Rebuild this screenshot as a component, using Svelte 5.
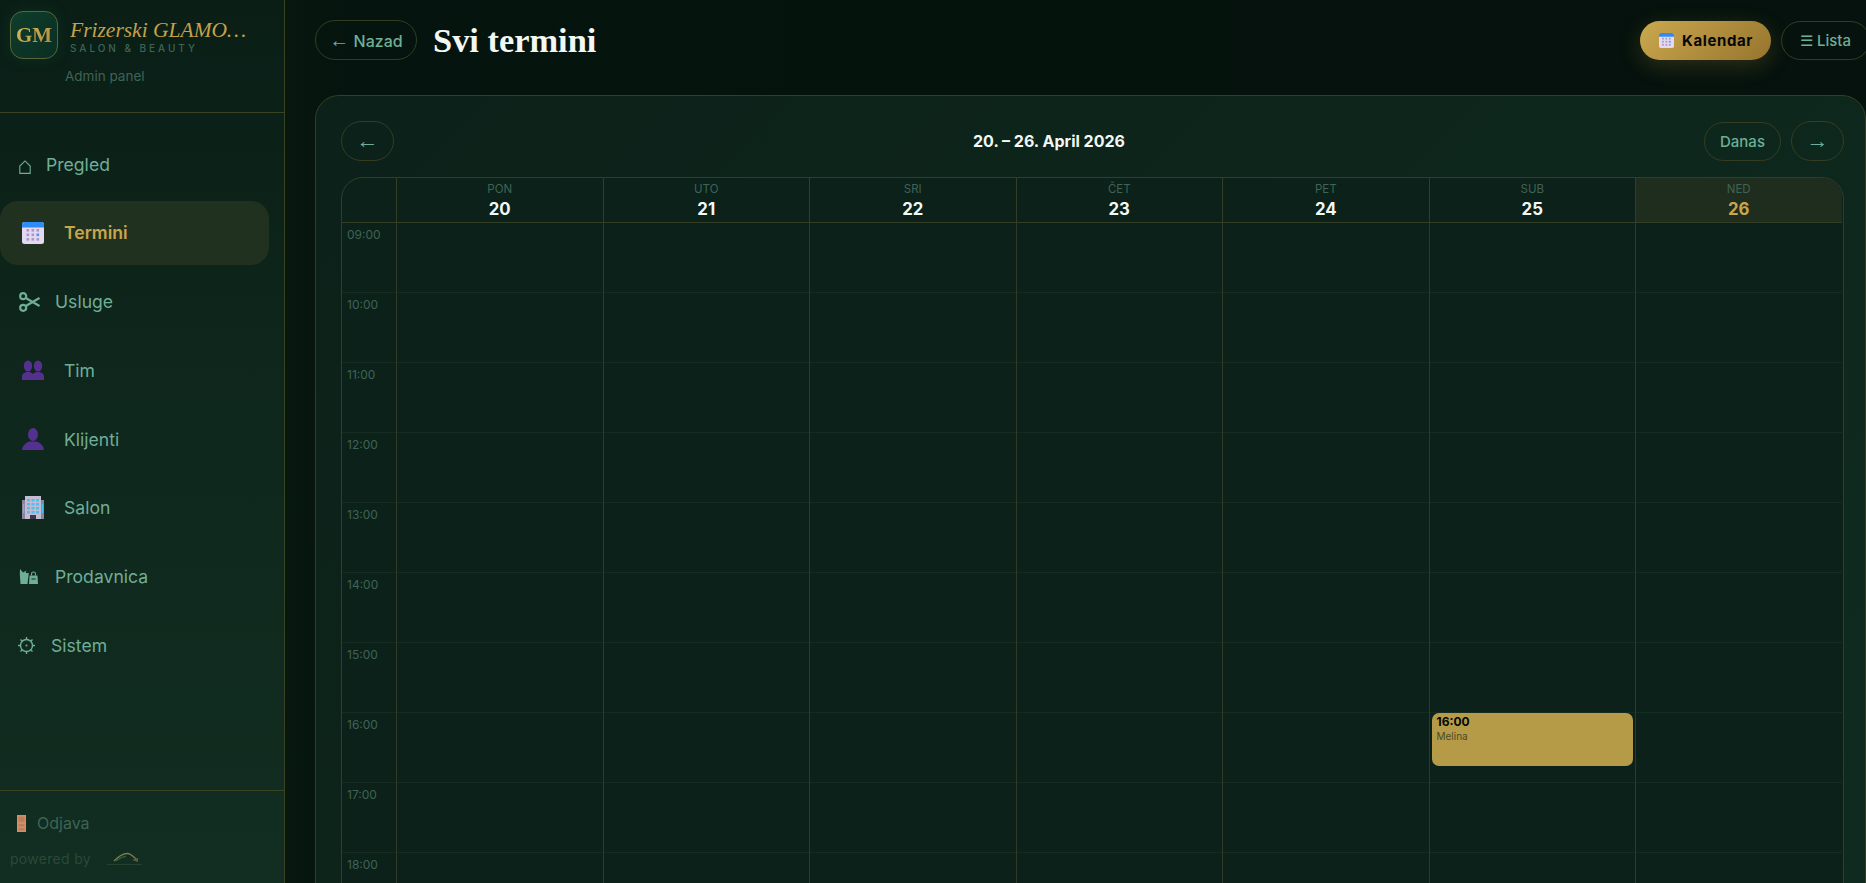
<script>
  const nav = [
    { label: 'Pregled', icon: 'home' },
    { label: 'Termini', icon: 'calendar', active: true },
    { label: 'Usluge', icon: 'scissors' },
    { label: 'Tim', icon: 'people' },
    { label: 'Klijenti', icon: 'person' },
    { label: 'Salon', icon: 'building' },
    { label: 'Prodavnica', icon: 'bags' },
    { label: 'Sistem', icon: 'gear' }
  ];
  const days = [
    { name: 'PON', num: 20 },
    { name: 'UTO', num: 21 },
    { name: 'SRI', num: 22 },
    { name: 'ČET', num: 23 },
    { name: 'PET', num: 24 },
    { name: 'SUB', num: 25, event: { time: '16:00', name: 'Melina', top: 490 } },
    { name: 'NED', num: 26, today: true }
  ];
  const hours = ['09:00', '10:00', '11:00', '12:00', '13:00', '14:00', '15:00', '16:00', '17:00', '18:00', '19:00'];
</script>

{#snippet calendar(size)}
  <svg width={size} height={size} viewBox="0 0 22 22" class="emoji">
    <rect x="0" y="0" width="22" height="22" rx="2.5" fill="#e4d8f2" />
    <path d="M0 5.5V2.5A2.5 2.5 0 0 1 2.5 0h17A2.5 2.5 0 0 1 22 2.5V5.5z" fill="#2f8cf5" />
    {#each [8, 12.5, 17] as y}
      {#each [4.5, 9.5, 14.5] as x}
        <rect {x} y={y - 1} width="2.6" height="2.6" fill={x === 14.5 && y === 12.5 ? '#3f9df2' : '#a99ac0'} />
      {/each}
    {/each}
  </svg>
{/snippet}

{#snippet icon(name)}
  {#if name === 'home'}
    <svg class="g-home" width="12" height="14" viewBox="0 0 12 14" fill="none" stroke="#6fae97" stroke-width="1.1">
      <path d="M.8 13.400V6L6 .9 11.200 6v7.400z" />
    </svg>
  {:else if name === 'calendar'}
    {@render calendar(22)}
  {:else if name === 'scissors'}
    <svg class="g-scissors" width="21" height="20" viewBox="0 0 21 20" fill="none" stroke="#6fae97" stroke-width="2.200">
      <circle cx="4.200" cy="4.200" r="3" />
      <circle cx="4.200" cy="15.800" r="3" />
      <path d="M6.800 6 20.500 14M6.800 14 20.500 6" />
    </svg>
  {:else if name === 'people'}
    <svg class="emoji" width="22" height="20" viewBox="0 0 22 20" fill="#55308f">
      <ellipse cx="6" cy="6" rx="4.2" ry="5.6" />
      <ellipse cx="16" cy="6" rx="4.2" ry="5.6" />
      <path d="M0 20v-3.5c0-3 3-4.5 6-4.5 2 0 3.800.6 5 2 1.200-1.400 3-2 5-2 3 0 6 1.500 6 4.500V20z" />
    </svg>
  {:else if name === 'person'}
    <svg class="emoji" width="22" height="22" viewBox="0 0 22 22" fill="#55308f">
      <ellipse cx="11" cy="6.500" rx="5" ry="6.500" />
      <path d="M0 22c.5-4.500 3.500-7 7.500-8.500h7c4 1.500 7 4 7.500 8.500z" />
    </svg>
  {:else if name === 'building'}
    <svg class="emoji" width="22" height="23" viewBox="0 0 22 23">
      <rect x="0" y="4" width="22" height="19" fill="#8d84a3" />
      <rect x="3" y="0" width="16" height="23" fill="#c4bdd2" />
      {#each [3, 7, 11, 15] as y}
        {#each [5, 9.500, 14] as x}
          <rect {x} {y} width="3" height="2.500" fill="#4cc0f2" />
        {/each}
      {/each}
      <rect x="1" y="8" width="1.200" height="9" fill="#4cc0f2" />
      <rect x="19.800" y="8" width="1.200" height="9" fill="#4cc0f2" />
      <rect x="8" y="19" width="6" height="4" fill="#3d3850" />
    </svg>
  {:else if name === 'bags'}
    <svg class="g-bags" width="19" height="15" viewBox="0 0 19 15" fill="#6fae97">
      <path d="M1 0 4 3.500 7.500 1.500 6.500 4H9.800L8.500 15H1.500L.8 5.300z" />
      <path d="M10.500 6.500h8l.5 8.500h-9z" />
      <path d="M12.500 6.500V5a2 2 0 0 1 4 0v1.500" fill="none" stroke="#6fae97" stroke-width="1.100" />
      <rect x="12.500" y="9.500" width="4" height="1" fill="#122b20" />
    </svg>
  {:else if name === 'gear'}
    <svg class="g-gear" width="17" height="17" viewBox="0 0 17 17" fill="none" stroke="#6fae97" stroke-width="1.400">
      <circle cx="8.500" cy="8.500" r="6" />
      <circle cx="8.500" cy="8.500" r="1" fill="#6fae97" stroke="none" />
      <path d="M8.500 0v2.500M8.500 14.500V17M0 8.500h2.500M14.500 8.500H17M2.500 2.500l1.800 1.800M12.700 12.700l1.800 1.800M14.500 2.500l-1.800 1.800M4.300 12.700l-1.800 1.800" />
    </svg>
  {/if}
{/snippet}

<div class="app">
  <aside class="sidebar">
    <div class="brand">
      <div class="brand-row">
        <div class="logo"><span>GM</span></div>
        <div class="brand-text">
          <div class="brand-name">Frizerski GLAMOUR Salon</div>
          <div class="brand-sub">SALON &amp; BEAUTY</div>
        </div>
      </div>
      <div class="brand-admin">Admin panel</div>
    </div>

    <nav class="nav">
      {#each nav as item}
        <div class="nav-item" class:active={item.active}>
          {@render icon(item.icon)}
          <span>{item.label}</span>
        </div>
      {/each}
    </nav>

    <div class="side-foot">
      <div class="logout">
        <svg width="9" height="17" viewBox="0 0 9 17">
          <rect width="9" height="17" fill="#d98d5f" />
          <rect x="1.500" y="1.500" width="6" height="5.500" rx="1" fill="#b97f60" />
          <rect x="1.500" y="9" width="6" height="2.500" fill="#b97f60" />
          <rect x="1.500" y="13" width="6" height="2.500" fill="#b97f60" />
        </svg>
        <span>Odjava</span>
      </div>
      <div class="powered">
        <span>powered by</span>
        <svg width="37" height="14" viewBox="0 0 37 14" fill="none">
          <path d="M8 9C13 4 17 1.500 21 1.500 25 1.500 28 5 31 8" stroke="#7d7a4c" stroke-width="1.300" />
          <path d="M10 9C14 6 17 4.500 20 4.500" stroke="#2a5c41" stroke-width="1.300" />
          <path d="M26 8 32 6 32 10z" fill="#55603f" />
          <path d="M1 12.500H36" stroke="#24402f" stroke-width="1" />
        </svg>
      </div>
    </div>
  </aside>

  <main class="main">
    <header class="topbar">
      <div class="top-left">
        <button class="pill back"><span class="arrow">←</span> Nazad</button>
        <h1>Svi termini</h1>
      </div>
      <div class="top-right">
        <button class="pill primary">{@render calendar(15)} Kalendar</button>
        <button class="pill list">☰ Lista</button>
      </div>
    </header>

    <section class="card">
      <div class="week-bar">
        <button class="pill nav-arrow">←</button>
        <div class="week-title">20. – 26. April 2026</div>
        <div class="week-right">
          <button class="pill today-btn">Danas</button>
          <button class="pill nav-arrow">→</button>
        </div>
      </div>

      <div class="grid">
        <div class="head corner"></div>
        {#each days as d}
          <div class="head" class:today={d.today}>
            <div class="head-name">{d.name}</div>
            <div class="head-num">{d.num}</div>
          </div>
        {/each}

        <div class="times">
          {#each hours as h}
            <div class="time-cell">{h}</div>
          {/each}
        </div>
        {#each days as d}
          <div class="day">
            {#each hours as h}
              <div class="hour"></div>
            {/each}
            {#if d.event}
              <div class="event" style="top:{d.event.top}px">
                <div class="event-time">{d.event.time}</div>
                <div class="event-name">{d.event.name}</div>
              </div>
            {/if}
          </div>
        {/each}
      </div>
    </section>
  </main>
</div>

<style>
  :global(body) {
    margin: 0;
    background: #05120d;
  }
  .app {
    display: flex;
    height: 883px;
    overflow: hidden;
    font-family: Inter, "Liberation Sans", sans-serif;
    color: #6fae97;
  }
  button {
    font-family: inherit;
  }

  /* sidebar */
  .sidebar {
    width: 285px;
    flex: none;
    box-sizing: border-box;
    display: flex;
    flex-direction: column;
    border-right: 1px solid #3a4423;
    background: linear-gradient(180deg, #0a1e16 0%, #0f281d 50%, #122d21 100%);
  }
  .brand {
    height: 113px;
    box-sizing: border-box;
    padding: 11px 10px 0;
    border-bottom: 1px solid #3a4423;
  }
  .brand-row {
    display: flex;
    align-items: center;
    gap: 12px;
  }
  .logo {
    width: 48px;
    height: 48px;
    flex: none;
    box-sizing: border-box;
    border: 1px solid #56683a;
    border-radius: 13px;
    background: linear-gradient(135deg, #0f3d2c, #0b2e22);
    box-shadow: 0 0 14px rgba(20, 90, 60, 0.25);
    display: flex;
    align-items: center;
    justify-content: center;
  }
  .logo span {
    font-family: "Liberation Serif", serif;
    font-weight: 700;
    font-size: 21px;
    background: linear-gradient(135deg, #dcbc5c, #a98a3a);
    -webkit-background-clip: text;
    background-clip: text;
    color: transparent;
  }
  .brand-text {
    min-width: 0;
    width: 186px;
    margin-top: 1px;
  }
  .brand-name {
    font-family: "Liberation Serif", serif;
    font-style: italic;
    font-size: 21.500px;
    line-height: 26px;
    white-space: nowrap;
    overflow: hidden;
    text-overflow: ellipsis;
    color: #c4a24a;
  }
  .brand-sub {
    font-size: 10px;
    line-height: 12px;
    letter-spacing: 2.950px;
    color: #3f6455;
    font-weight: 500;
    margin-top: -1px;
  }
  .brand-admin {
    font-size: 13.500px;
    line-height: 16px;
    color: #3f6455;
    margin: 9px 0 0 55px;
  }

  .nav {
    flex: 1;
    display: flex;
    flex-direction: column;
    gap: 4.800px;
    padding-top: 19px;
    padding-right: 15px;
  }
  .nav-item {
    height: 64px;
    display: flex;
    align-items: center;
    gap: 13px;
    padding-left: 19px;
    font-size: 17.600px;
    border-radius: 18px;
    color: #6fae97;
  }
  .nav-item.active {
    background: #21311f;
    color: #c9a64c;
    font-weight: 600;
  }
  .g-home {
    flex: none;
    margin: 5px 2px 0 0;
  }
  .g-scissors {
    flex: none;
    margin-right: 2px;
  }
  .g-bags {
    flex: none;
    margin-right: 4px;
  }
  .g-gear {
    flex: none;
    margin: 0 3px 0 -1px;
  }
  .emoji {
    flex: none;
    margin: 0 7px 0 3px;
  }
  .top-right .emoji {
    margin: 0 4px 0 1px;
    vertical-align: -2px;
  }

  .side-foot {
    height: 93px;
    box-sizing: border-box;
    border-top: 1px solid #3a4423;
    padding: 24px 10px 0 17px;
  }
  .logout {
    display: flex;
    align-items: center;
    gap: 11px;
    font-size: 16px;
    line-height: 17px;
    color: #3f6455;
  }
  .powered {
    display: flex;
    align-items: center;
    gap: 15px;
    margin: 18px 0 0 -7px;
    font-size: 14px;
    letter-spacing: 0.300px;
    color: #294a3a;
  }

  /* main */
  .main {
    flex: 1;
    min-width: 0;
    padding: 20px 0 0 30px;
    background: linear-gradient(90deg, #07180f 0%, #05140e 4%, #05120d 100%);
  }
  .topbar {
    display: flex;
    justify-content: space-between;
    height: 75px;
    margin-right: -4px;
  }
  .top-left {
    display: flex;
    align-items: flex-start;
    gap: 16px;
  }
  h1 {
    margin: 0;
    font-family: "Liberation Serif", serif;
    font-weight: 700;
    font-size: 34.400px;
    line-height: 40px;
    color: #f2f8f4;
  }
  .top-right {
    display: flex;
    align-items: flex-start;
    gap: 10px;
  }
  .pill {
    box-sizing: border-box;
    height: 40px;
    border: 1px solid #343d22;
    border-radius: 20px;
    background: transparent;
    color: #6fae97;
    font-size: 16px;
    font-weight: 500;
    padding: 0;
    white-space: nowrap;
  }
  .back {
    width: 102px;
  }
  .arrow {
    font-family: "Liberation Serif", serif;
    font-weight: 400;
    font-size: 20px;
  }
  .primary {
    width: 131px;
    height: 39px;
    margin-top: 1px;
    border: none;
    background: linear-gradient(135deg, #cba94f, #96742d);
    color: #040704;
    font-size: 15px;
    font-weight: 700;
    letter-spacing: 0.600px;
    box-shadow: 0 6px 22px rgba(190, 150, 60, 0.22);
  }
  .list {
    width: 89px;
    height: 39px;
    margin-top: 1px;
    font-size: 15px;
    text-align: left;
    padding-left: 18px;
  }

  .card {
    box-sizing: border-box;
    width: 1551px;
    border: 1px solid #333f24;
    border-radius: 24px 24px 0 0;
    padding: 25px 21px 0 25px;
    background: linear-gradient(135deg, #0c2119, #0f2b1f);
    height: 900px;
  }
  .week-bar {
    display: flex;
    justify-content: space-between;
    align-items: center;
    height: 40px;
    margin-bottom: 16px;
  }
  .week-bar .nav-arrow {
    width: 53px;
    font-family: "Liberation Serif", serif;
    font-size: 22px;
    font-weight: 400;
  }
  .week-title {
    font-size: 16px;
    font-weight: 700;
    color: #f2f8f4;
  }
  .week-right {
    display: flex;
    align-items: center;
    gap: 10px;
  }
  .today-btn {
    width: 77px;
    height: 39px;
    font-size: 15px;
  }

  .grid {
    display: grid;
    grid-template-columns: 54px repeat(7, 206.500px);
    grid-template-rows: 45px auto;
    width: 1503px;
    box-sizing: border-box;
    border: 1px solid #333f24;
    border-radius: 22px 22px 0 0;
    background: #0b2119;
    overflow: hidden;
  }
  .head {
    box-sizing: border-box;
    border-bottom: 1px solid #333f24;
    border-left: 1px solid #333f24;
    text-align: center;
    padding-top: 3px;
  }
  .head.corner {
    border-left: none;
  }
  .head.today {
    background: #1e2d1e;
  }
  .head-name {
    font-size: 11.500px;
    line-height: 16px;
    color: #3f6455;
  }
  .head-num {
    font-size: 16.800px;
    line-height: 22px;
    margin-top: 1px;
    font-weight: 700;
    color: #f2f8f4;
  }
  .today .head-num {
    color: #c9a64c;
  }
  .time-cell {
    height: 70px;
    box-sizing: border-box;
    padding: 5px 0 0 5px;
    font-size: 12px;
    line-height: 14px;
    color: #3f6455;
    border-bottom: 1px solid #152d20;
  }
  .day {
    position: relative;
    border-left: 1px solid #2f3b27;
  }
  .hour {
    height: 70px;
    box-sizing: border-box;
    border-bottom: 1px solid #152d20;
  }
  .event {
    position: absolute;
    left: 2px;
    right: 2px;
    height: 53px;
    box-sizing: border-box;
    padding: 1px 5px;
    border-radius: 7px;
    background: #b59b48;
    color: #040704;
  }
  .event-time {
    font-size: 12px;
    line-height: 15px;
    font-weight: 700;
  }
  .event-name {
    font-size: 10px;
    line-height: 14px;
    color: #4a4a25;
  }
</style>
